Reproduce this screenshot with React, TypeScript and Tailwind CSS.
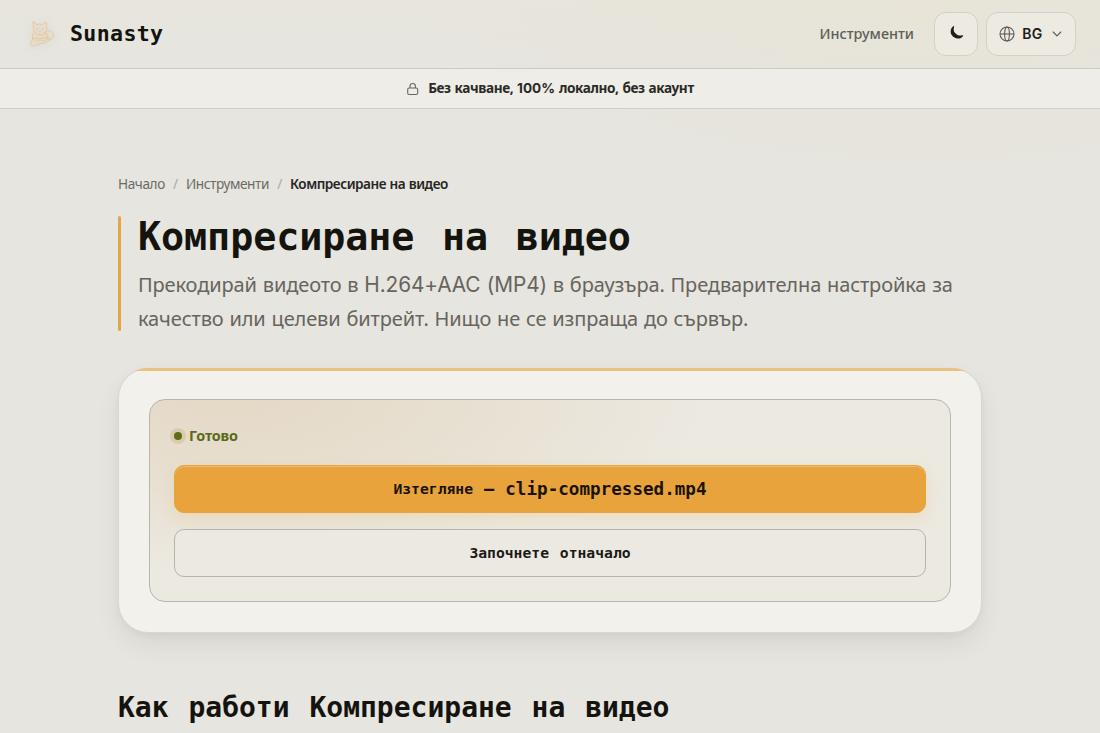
import type { ReactNode } from 'react';

const SANS = "font-['Noto_Sans','Open_Sans',sans-serif]";
const MONO = "font-['DejaVu_Sans_Mono','Liberation_Mono',monospace]";

const Latin = ({ className = '', children }: { className?: string; children: ReactNode }) => (
  <span className={`font-['Inter',sans-serif] ${className}`}>{children}</span>
);

const CatLogo = () => (
  <svg
    viewBox="0 0 32 32"
    className="size-8 drop-shadow-[0_1px_4px_rgba(140,140,130,0.25)]"
    fill="#ead9ba"
    fillOpacity="0.3"
    stroke="#e9bd7c"
    strokeOpacity="0.7"
    strokeWidth="0.9"
    strokeLinejoin="round"
    strokeLinecap="round">
    <path d="M20.500 14.500c1-1.800 4-2.600 6-1 2.300 2 2.400 5.500.3 7.300-1.800 1.500-4.300 1.300-5.800.2" />
    <path d="M8.500 15c-1.500 2.500-1.200 5-.7 7l12 .5c3-1 3.500-3 2.500-5.500-.5-1.500-2-2.500-4-2.500" />
    <path d="M8.300 3.800 11.500 6.500c2-.5 4-.5 6 0l3.500-2.600c.8 2.600 1 6 .5 8.300-1.400 3.600-4 4.800-6.800 4.600-3-.1-5.200-1.900-6-4.800-.5-2.300-.8-5.600-.4-8.200Z" />
    <path d="M7.500 21c-1.600 2.200-2.300 4.700-1.200 6.500 1.800 1.300 4 .5 6-.8l8.500-2.400c2.600-.6 4-2 3.200-3.800-1.400-1.800-4-1-6-.4l-4 1-2.800-1.300Z" />
    <path d="m10.800 10.500 1.500.4m5 0 1.500-.4m-4.700 2.500h1.300" />
  </svg>
);

const MoonIcon = () => (
  <svg viewBox="0 0 16 16" className="mb-0.5 ml-0.5 size-4" fill="#1f1e1a">
    <path d="M4.300 1.200C1.600 3.200.9 7 2.700 10c1.900 3.200 5.900 4.400 9.200 2.900 1-.5 1.700-1.100 2.200-1.900.3-.5-.2-.9-.7-.7-2.600.7-5.600-.1-7.300-2.300C4.500 6.200 4.400 4 5.100 1.900c.2-.6-.3-1-.8-.7Z" />
  </svg>
);

const GlobeIcon = () => (
  <svg viewBox="0 0 16 16" className="size-4" fill="none" stroke="#5b5a54" strokeWidth="1.1">
    <circle cx="8" cy="8" r="7" />
    <ellipse cx="8" cy="8" rx="2.400" ry="7" />
    <path d="M1 8h14" />
  </svg>
);

const LockIcon = () => (
  <svg
    viewBox="0 0 14 14"
    className="size-3.5"
    fill="none"
    stroke="#66655f"
    strokeWidth="1.100"
    strokeLinejoin="round">
    <rect x="1.700" y="6" width="10" height="6.500" rx="1.500" />
    <path d="M4 6V4.200a2.700 2.700 0 0 1 5.400 0V6" />
  </svg>
);

const ChevronIcon = () => (
  <svg viewBox="0 0 10 10" className="size-2.5" fill="none" stroke="#5b5a54" strokeWidth="1.100">
    <path d="m1.200 3 3.800 3.800L8.800 3" strokeLinecap="round" strokeLinejoin="round" />
  </svg>
);

const Header = () => (
  <header className="flex h-[69px] items-center justify-between border-b border-[#cbcac5] bg-[linear-gradient(to_bottom,rgba(232,229,218,0.5),rgba(230,229,224,0.2))] pr-6 pl-[25px]">
    <a className="flex items-center gap-[13px]">
      <CatLogo />
      <span className={`${MONO} text-[21.600px] leading-8 font-bold tracking-[0.35px] text-[#14130e]`}>
        Sunasty
      </span>
    </a>
    <nav className="flex items-center gap-2">
      <a className={`${SANS} mr-3 text-[14.400px] font-medium text-[#605e57]`}>Инструменти</a>
      <button className="grid size-11 place-items-center rounded-xl border border-[#d2d0c8] bg-[#edeae2]">
        <MoonIcon />
      </button>
      <button className="flex h-11 w-[90px] items-center rounded-xl border border-[#d2d0c8] bg-[#edeae2] pl-3">
        <GlobeIcon />
        <span className="mb-px ml-[7px] w-[21px] font-['Inter',sans-serif] text-[14px] font-semibold tracking-[0.5px] text-[#1c1b17]">
          BG
        </span>
        <span className="ml-[9px]">
          <ChevronIcon />
        </span>
      </button>
    </nav>
  </header>
);

const PrivacyBar = () => (
  <div
    className={`${SANS} flex h-10 items-center justify-center gap-2 border-b border-[#cfcec9] bg-[#eeede8] text-[13.600px] font-bold tracking-[-0.41px] [word-spacing:0.800px] text-[#2b2a26]`}>
    <LockIcon />
    <p>
      Без качване, <Latin className="tracking-normal">100%</Latin> локално, без акаунт
    </p>
  </div>
);

const Breadcrumbs = () => (
  <nav
    className={`${SANS} flex h-5 items-center gap-[8.200px] text-[13.600px] tracking-[-0.4px] text-[#6b6a63]`}>
    <a>Начало</a>
    <span className="text-[#aaa9a3]">/</span>
    <a>Инструменти</a>
    <span className="text-[#aaa9a3]">/</span>
    <span className="font-semibold tracking-[-0.48px] [word-spacing:0.500px] text-[#26251f]">
      Компресиране на видео
    </span>
  </nav>
);

const ResultCard = () => (
  <section className="relative mt-[37px] rounded-[30px] border border-[#d8d7d1] bg-[#f2f1ec] p-[30px] shadow-[0_12px_28px_-6px_rgba(60,58,40,0.13),0_2px_6px_rgba(60,58,40,0.04)]">
    <div className="pointer-events-none absolute -inset-px overflow-hidden rounded-[30px]">
      <div className="h-[2.500px] bg-[#ebc183]" />
    </div>
    <div className="rounded-2xl border border-[#b6b5ae] bg-[#ece9e1] bg-[radial-gradient(ellipse_60%_85%_at_10%_0%,#e5d9c7_0%,#e7dfd0_45%,rgba(236,233,225,0)_100%)] p-6">
      <div className="flex h-6 items-center gap-[7px]">
        <span className="size-2 rounded-full bg-[#5d6d15] shadow-[0_0_0_4px_rgba(200,170,115,0.35)]" />
        <span className={`${SANS} text-[14.400px] font-bold tracking-[-0.2px] text-[#5a6a16]`}>
          Готово
        </span>
      </div>
      <button
        className={`${MONO} mt-[17px] flex h-12 w-full items-center justify-center rounded-[10px] border border-[#e8a33c] bg-[#e8a33c] text-[#1a1206] shadow-[inset_0_1px_0_rgba(255,255,255,0.28),0_6px_16px_rgba(232,180,80,0.22)]`}>
        <span className="text-[14.700px] font-bold">Изтегляне</span>
        <span className="mx-[11px] text-[17px] leading-none font-bold">–</span>
        <span className="text-[17.600px] font-bold">clip-compressed.mp4</span>
      </button>
      <button
        className={`${MONO} mt-4 h-12 w-full rounded-[10px] border border-[#b4b3ac] bg-[#ece9e2] text-[14.700px] font-bold [word-spacing:2px] text-[#1b1a15]`}>
        Започнете отначало
      </button>
    </div>
  </section>
);

export default function App() {
  return (
    <div
      lang="bg"
      className="h-[733px] overflow-hidden bg-[#e6e5e0] bg-[radial-gradient(ellipse_520px_200px_at_930px_0px,rgba(231,226,210,0.8),rgba(230,229,224,0)_100%)]">
      <Header />
      <PrivacyBar />
      <main className="mx-auto w-[864px] pt-[65px]">
        <Breadcrumbs />
        <div className="relative mt-[22px] h-[115px] pl-5">
          <span className="absolute inset-y-0 left-0 w-[3px] rounded-sm bg-[#e3a548]" />
          <h1
            className={`${MONO} text-[38.400px] leading-[42px] font-bold tracking-[-0.08px] whitespace-nowrap text-[#14130e] [word-spacing:4.600px]`}>
            Компресиране на видео
          </h1>
          <p
            className={`${SANS} mt-[10px] text-[20px] leading-[34px] tracking-[-0.11px] [word-spacing:0.750px] whitespace-nowrap text-[#66645c]`}>
            Прекодирай видеото в <Latin className="text-[20.800px]">H.264+AAC (MP4)</Latin>{' '}
            в браузъра. Предварителна настройка за
            <br />
            качество или целеви битрейт. Нищо не се изпраща до сървър.
          </p>
        </div>
        <ResultCard />
        <h2
          className={`${MONO} mt-[57px] text-[28px] leading-9 font-bold whitespace-nowrap text-[#14130e] [word-spacing:3px]`}>
          Как работи Компресиране на видео
        </h2>
      </main>
    </div>
  );
}
